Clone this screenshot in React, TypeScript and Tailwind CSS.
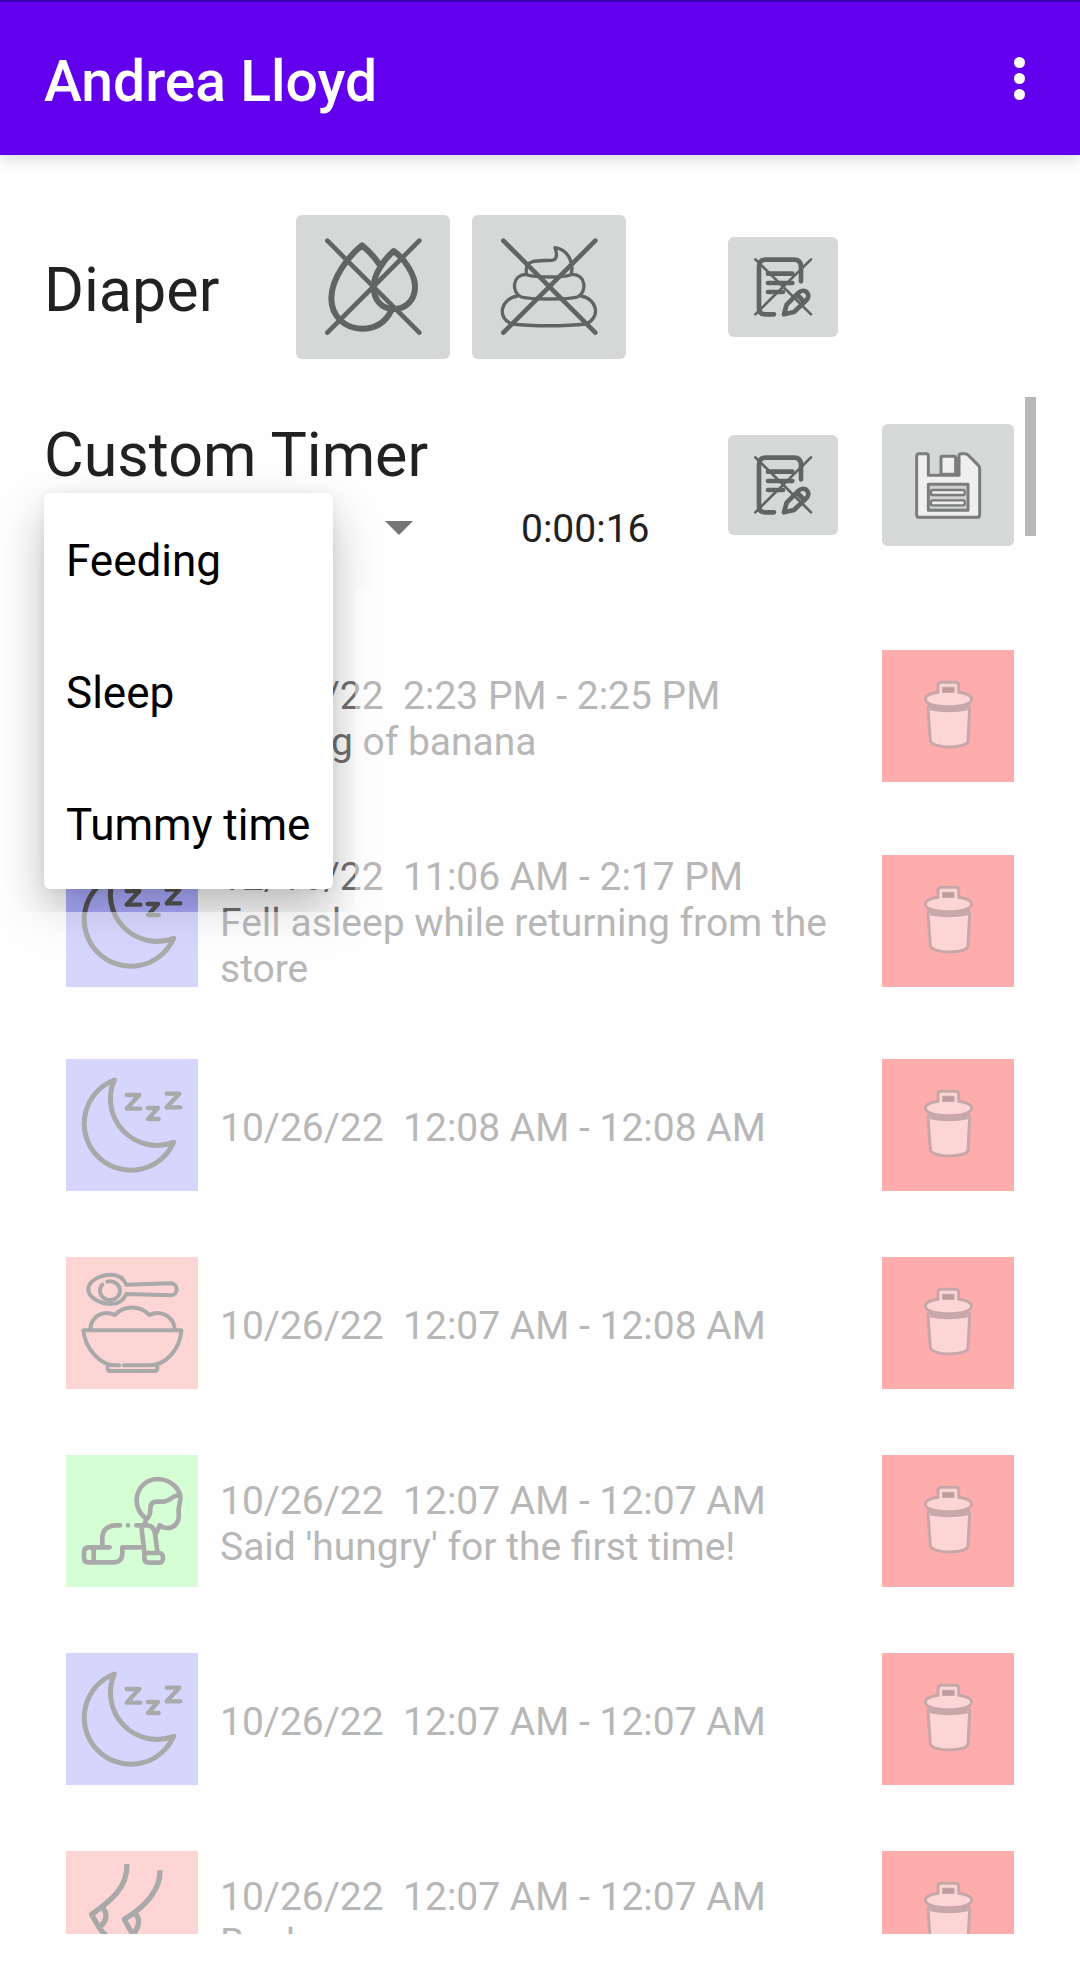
import type { ReactNode } from "react";

type Kind = "feeding" | "sleep" | "meal" | "tummy" | "nursing";

interface Entry {
  kind: Kind;
  date: string;
  time: string;
  note?: string;
}

const entries: Entry[] = [
  { kind: "feeding", date: "12/16/22", time: "2:23 PM - 2:25 PM", note: "Helping of banana" },
  { kind: "sleep", date: "12/16/22", time: "11:06 AM - 2:17 PM", note: "Fell asleep while returning from the store" },
  { kind: "sleep", date: "10/26/22", time: "12:08 AM - 12:08 AM" },
  { kind: "meal", date: "10/26/22", time: "12:07 AM - 12:08 AM" },
  { kind: "tummy", date: "10/26/22", time: "12:07 AM - 12:07 AM", note: "Said 'hungry' for the first time!" },
  { kind: "sleep", date: "10/26/22", time: "12:07 AM - 12:07 AM" },
  { kind: "nursing", date: "10/26/22", time: "12:07 AM - 12:07 AM", note: "Back" },
];

function MoonIcon() {
  return (
    <>
      <path d="M145 63A140 140 0 1 0 323 250A140 140 0 0 1 145 63Z" strokeWidth="15" />
      <path d="M182 108H220L182 149H223M245 147H276L246 180H278M302 104H340L302 145H343" strokeWidth="13" />
    </>
  );
}

function BowlIcon() {
  return (
    <g strokeWidth="12">
      <path d="M181 83C172 62 155 53 135 53C105 53 67 70 67 97C67 124 105 141 135 141C155 141 172 132 181 111L314 115A18 18 0 0 0 314 79Z" />
      <path d="M124 74A30 28 0 1 1 109 83" />
      <path d="M73 217C74 178 112 157 146 174C175 144 222 144 250 174C285 157 324 178 326 217" />
      <path d="M52 220H346C342 272 305 325 247 325H174M52 220C57 272 100 325 149 325H160M125 327V334Q125 342 133 342H266Q274 342 274 334V327" />
    </g>
  );
}

function BabyIcon() {
  return (
    <g strokeWidth="14">
      <path d="M240 190C190 155 210 72 277 72C318 74 345 106 343 132C341 150 338 155 338 165C339 190 338 200 328 210C315 223 292 221 281 211L270 236" />
      <path d="M339 120C318 122 310 140 293 140H272C256 140 253 152 253 162C253 180 250 186 241 193L234 211" />
      <path d="M211 211H245C259 212 265 222 267 236L274 290M227 222L235 292" />
      <path d="M246 294H280C295 294 295 323 280 323H248Q235 323 235 310V294Z" />
      <path d="M162 211H148C125 212 109 226 109 246V277M131 277H68Q54 278 54 291V308Q54 322 68 322H145Q169 319 169 296V277H222M83 278V322M186 211H186.1" />
    </g>
  );
}

function NursingIcon() {
  return (
    <g strokeWidth="16">
      <path strokeLinecap="butt" d="M183 39C184 110 137 148 77 190C92 215 98 238 125 258L150 300" />
      <path d="M110 171C128 190 119 216 102 226" />
      <path strokeLinecap="butt" d="M282 58C283 125 230 171 175 205C185 225 190 235 203 252L230 300" />
      <path d="M210 190C226 210 214 232 203 250" />
    </g>
  );
}

const tiles: Record<Kind, { color: string; icon: ReactNode }> = {
  feeding: { color: "bg-[#ffadad]", icon: <BowlIcon /> },
  meal: { color: "bg-[#ffadad]", icon: <BowlIcon /> },
  sleep: { color: "bg-[#adadff]", icon: <MoonIcon /> },
  tummy: { color: "bg-[#adffad]", icon: <BabyIcon /> },
  nursing: { color: "bg-[#ffadad]", icon: <NursingIcon /> },
};

function Tile({ kind }: { kind: Kind }) {
  const tile = tiles[kind];
  return (
    <div className={`size-[132px] shrink-0 ${tile.color}`}>
      <svg viewBox="0 0 396 396" className="size-full" fill="none" stroke="#555555" strokeLinecap="round" strokeLinejoin="round" aria-hidden="true">
        {tile.icon}
      </svg>
    </div>
  );
}

function TrashIcon() {
  return (
    <svg viewBox="0 0 396 396" className="size-full" fill="#ffadad" stroke="#915151" strokeWidth="9" strokeLinejoin="round" aria-hidden="true">
      <path d="M138 176Q138 168 146 168H256Q264 168 263 176L258 272C258 297 148 297 145 272Z" />
      <path d="M144 175Q201 186 257 175" strokeWidth="12" />
      <path d="M168 127V106Q168 97 177 97H221Q230 97 230 106V127C252 130 269 137 269 148C269 178 130 178 130 148C130 137 146 130 168 127Z" />
      <path d="M182 112H216V127H182Z" fill="#813838" strokeWidth="4" />
    </svg>
  );
}

function NoteButton({ label }: { label: string }) {
  return (
    <button type="button" aria-label={label} className="h-[100px] w-[110px] shrink-0 rounded-md bg-[#d6d8d7]">
      <svg viewBox="0 0 330 300" className="size-full" fill="none" stroke="#616461" strokeWidth="14" strokeLinecap="round" strokeLinejoin="round" aria-hidden="true">
        <path d="M219 133V90Q219 68 198 68H112Q93 68 93 90V212Q93 232 112 232H138" />
        <path d="M120 110H193M120 138H193M120 165H165" />
        <path d="M168 232L176 203L212 167C221 158 233 161 237 167C244 174 241 184 234 191L198 225ZM208 174L229 195" />
        <path d="M82 67L249 232M249 67L82 232" strokeWidth="8" />
      </svg>
    </button>
  );
}

function DiaperButton({ label, children }: { label: string; children: ReactNode }) {
  return (
    <button type="button" aria-label={label} className="h-36 w-[154px] shrink-0 rounded-md bg-[#d6d8d7]">
      <svg viewBox="0 0 462 432" className="size-full" fill="none" stroke="#616461" strokeLinecap="round" strokeLinejoin="round" aria-hidden="true">
        {children}
        <path d="M94 77L370 353M370 77L94 353" strokeWidth="14" />
      </svg>
    </button>
  );
}

export default function App() {
  return (
    <div className="flex h-screen flex-col overflow-hidden bg-[#fefefe] font-[Roboto,sans-serif] text-[#212121]">
      <header className="z-10 flex h-[155px] shrink-0 items-center justify-between border-t-2 border-[#3700b3] bg-[#6200ee] pr-[43px] pl-11 text-white shadow-[0_4px_14px_rgba(0,0,0,0.14)]">
        <h1 className="pt-1.5 text-[57px] font-medium">Andrea Lloyd</h1>
        <button type="button" aria-label="More options" className="flex h-16 w-9 flex-col items-center justify-center gap-[5px]">
          <span className="size-[11px] rounded-full bg-white" />
          <span className="size-[11px] rounded-full bg-white" />
          <span className="size-[11px] rounded-full bg-white" />
        </button>
      </header>

      <section className="flex shrink-0 items-center pt-[60px] pr-[66px] pl-11">
        <h2 className="w-[252px] shrink-0 pt-1.5 text-[61px] leading-[72px]">Diaper</h2>
        <div className="flex gap-[22px]">
          <DiaperButton label="Wet">
            <g strokeWidth="18">
              <path d="M250 148C235 125 215 105 198 91C165 117 106 185 106 250C106 305 148 341 198 341C240 341 270 320 287 284" />
              <path d="M293 108C265 132 233 178 233 215C233 256 258 282 293 282C330 282 357 255 357 215C357 178 326 132 293 108Z" />
            </g>
          </DiaperButton>
          <DiaperButton label="Soiled">
            <g strokeWidth="10">
              <path d="M249 98C254 111 259 136 238 136C204 138 164 132 163 162Q162 178 166 180C194 188 270 188 296 180C306 155 296 105 249 98Z" />
              <path d="M165 178C118 178 118 234 148 246C178 254 288 254 316 246C345 234 345 178 299 178" />
              <path d="M136 243C84 252 75 310 119 327C180 334 280 334 341 327C386 310 378 252 327 243" />
            </g>
          </DiaperButton>
        </div>
        <div className="mr-44 ml-auto flex">
          <NoteButton label="Add diaper note" />
        </div>
      </section>

      <section className="relative mt-[46px] flex shrink-0 items-center pr-[66px] pl-11">
        <div className="min-w-0 flex-1 pt-3.5 pb-px">
          <h2 className="text-[61px] leading-[72px]">
            <label htmlFor="timer-kind">Custom Timer</label>
          </h2>
          <div className="relative flex h-[73px] items-center">
            <select id="timer-kind" defaultValue="Feeding" className="h-full w-[402px] appearance-none bg-transparent pl-[22px] text-[44px]">
              <option>Feeding</option>
              <option>Sleep</option>
              <option>Tummy time</option>
            </select>
            <svg viewBox="0 0 28 14" className="pointer-events-none -ml-[61px] h-3.5 w-7 shrink-0" fill="#757575" aria-hidden="true">
              <path d="M0 0H28L14 14Z" />
            </svg>
            <time className="ml-[108px] pt-1 text-[39px]">0:00:16</time>
            <ul className="absolute top-0.5 left-0 z-10 min-w-[289px] rounded-md bg-white text-[44px] text-black shadow-[0_22px_46px_rgba(0,0,0,0.26),0_0_10px_rgba(0,0,0,0.06)]">
              {["Feeding", "Sleep", "Tummy time"].map((name) => (
                <li key={name}>
                  <button type="button" className="flex h-[132px] w-full items-center px-[22px] pt-1 whitespace-nowrap">
                    {name}
                  </button>
                </li>
              ))}
            </ul>
          </div>
        </div>
        <div className="flex items-center gap-11">
          <NoteButton label="Add timer note" />
          <button type="button" aria-label="Save" className="h-[122px] w-[132px] rounded-md bg-[#d6d8d7]">
            <svg viewBox="0 0 396 366" className="size-full" fill="#efefef" stroke="#7a7d7a" strokeWidth="9" strokeLinejoin="round" aria-hidden="true">
              <path d="M112 89H134Q139 89 139 95V154H231V95Q231 89 237 89H249Q254 89 258 93L287 122Q293 127 293 133V272Q293 280 285 280H112Q104 280 104 272V97Q104 89 112 89Z" />
              <rect x="177" y="97" width="44" height="54" rx="4" />
              <path d="M226 100V152" />
              <rect x="139" y="181" width="119" height="78" fill="#cfd1d0" />
              <rect x="147" y="198" width="101" height="15" rx="4" strokeWidth="7" />
              <rect x="147" y="229" width="101" height="15" rx="4" strokeWidth="7" />
            </svg>
          </button>
        </div>
        <div className="absolute -top-2 right-11 h-[139px] w-[11px] bg-[#b8b8b8]" />
      </section>

      <section className="relative mt-[23px] mb-[41px] min-h-0 flex-1">
        <ul className="h-full overflow-hidden px-[66px] pt-[29px]">
          {entries.map((entry, index) => (
            <li key={index} className="flex items-center gap-[22px] py-[33px]">
              <Tile kind={entry.kind} />
              <div className="min-w-0 flex-1 pt-1.5 pb-px text-[39px] leading-[46px] text-[#707070]">
                <p>
                  {entry.date}&nbsp; {entry.time}
                </p>
                {entry.note && <p>{entry.note}</p>}
              </div>
              <button type="button" aria-label="Delete entry" className="size-[132px] shrink-0 bg-[#ff5b5b]">
                <TrashIcon />
              </button>
            </li>
          ))}
        </ul>
        <div className="pointer-events-none absolute inset-0 z-20 bg-[#fefefe]/50 [clip-path:polygon(355px_0,100%_0,100%_100%,22px_100%,22px_324px,355px_324px)]" />
      </section>
    </div>
  );
}
